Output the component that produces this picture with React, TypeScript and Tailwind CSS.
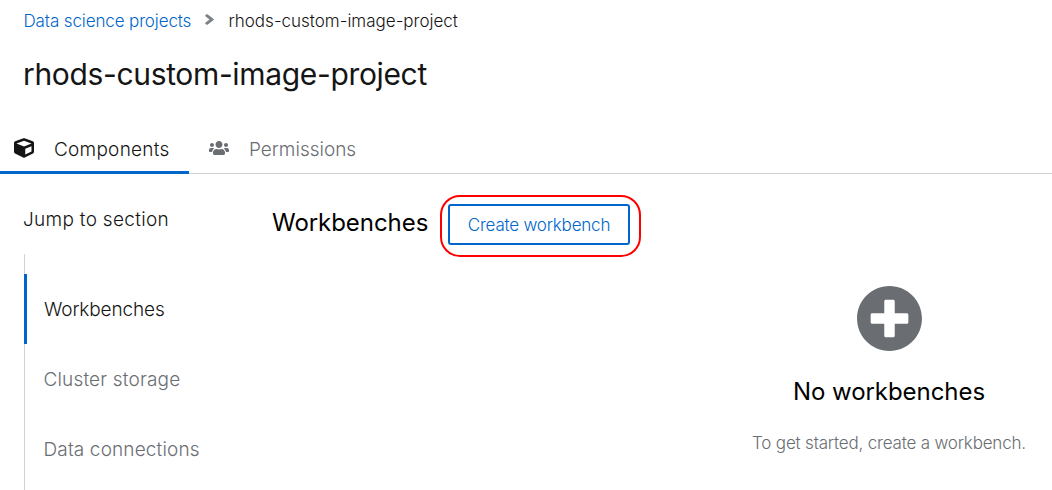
import { FaAngleRight, FaCube, FaPlusCircle, FaUsers } from "react-icons/fa";

function Breadcrumb() {
  return (
    <nav className="flex h-[42px] items-center pl-[23.5px] text-[17px] font-light whitespace-nowrap">
      <a href="#" className="w-[180px] pt-0.5 tracking-[-0.12px] text-[#0066cc]">
        Data science projects
      </a>
      <FaAngleRight className="mb-[3px] h-[17px] w-[11px] text-[#7d8084]" preserveAspectRatio="none" />
      <span className="ml-[14px] pt-0.5 text-[#151515]">rhods-custom-image-project</span>
    </nav>
  );
}

function Tabs() {
  return (
    <div className="mt-[18px] flex h-[50px] border-b border-[#d2d2d2] text-[19px] font-light whitespace-nowrap">
      <button className="-mb-px flex w-[189px] items-center border-b-3 border-[#0066cc] pt-[3px] pl-[14px] text-[#151515]">
        <FaCube className="mb-[3px] size-5" />
        <span className="ml-5 pt-0.5 tracking-[0.25px]">Components</span>
      </button>
      <button className="flex items-center pt-px pl-[20px] text-[#6a6e73]">
        <FaUsers className="mb-[3px] h-[18px] w-5" />
        <span className="ml-5 pt-0.5">Permissions</span>
      </button>
    </div>
  );
}

function JumpLinks() {
  return (
    <aside className="flex w-[273px] flex-col pl-6 text-[19px] font-light whitespace-nowrap">
      <h2 className="flex h-20 items-center tracking-[0.3px] text-[#151515]">
        <span className="-ml-px pt-3">Jump to section</span>
      </h2>
      <ul className="flex-1 border-l border-[#d2d2d2] pt-5">
        <li className="-ml-px flex h-[70px] items-center border-l-3 border-[#0066cc] pt-0.5 pl-[17px] tracking-[-0.12px] text-[#151515]">
          Workbenches
        </li>
        <li className="flex h-[70px] items-center pt-0.5 pl-[18.5px] tracking-[0.17px] text-[#6a6e73]">
          Cluster storage
        </li>
        <li className="flex h-[70px] items-center pt-0.5 pl-[18.5px] tracking-[0.14px] text-[#6a6e73]">
          Data connections
        </li>
      </ul>
    </aside>
  );
}

function WorkbenchesSection() {
  return (
    <section className="flex-1 whitespace-nowrap">
      <div className="flex pt-[30px]">
        <h2 className="-ml-px w-[176px] pt-px text-[24px] leading-9 tracking-[-0.05px] text-black">
          Workbenches
        </h2>
        <div className="relative">
          <button className="flex h-[41px] w-[182px] items-center justify-center rounded-[3px] border-2 border-[#0066cc] pt-0.5 text-[17px] font-light tracking-[-0.2px] text-[#0066cc]">
            Create workbench
          </button>
          <span className="pointer-events-none absolute -top-[9px] -right-[11px] -bottom-3 -left-2 rounded-[20px] border-2 border-[#ff0000]" />
        </div>
      </div>
      <div className="ml-[466px] flex w-[300px] flex-col items-center pt-10">
        <FaPlusCircle className="size-[67px] text-[#6a6e73]" />
        <h3 className="mt-[22px] text-[24px] leading-9 tracking-[-0.06px] text-black">No workbenches</h3>
        <p className="mt-[21px] text-[17px] leading-6 font-light tracking-[-0.18px] text-[#6a6e73]">
          To get started, create a workbench.
        </p>
      </div>
    </section>
  );
}

export default function App() {
  return (
    <div className="flex h-[490px] w-[1052px] flex-col overflow-hidden bg-white font-['Inter','Open_Sans',sans-serif]">
      <Breadcrumb />
      <h1 className="pl-[23px] text-[30px] leading-[64px] tracking-[-0.34px] text-[#151515]">
        rhods-custom-image-project
      </h1>
      <Tabs />
      <main className="flex flex-1">
        <JumpLinks />
        <WorkbenchesSection />
      </main>
    </div>
  );
}
